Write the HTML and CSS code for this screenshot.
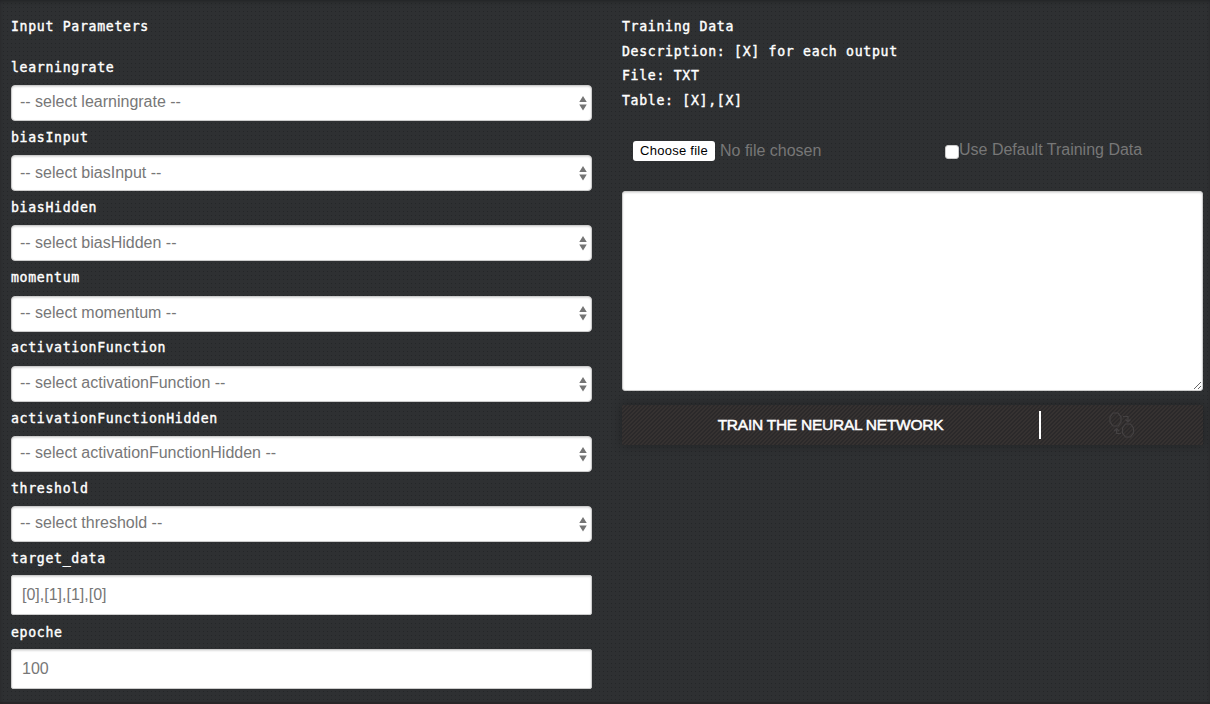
FILE: index.html
```html
<!DOCTYPE html>
<html lang="en">
<head>
<meta charset="utf-8">
<title>Neural Network Training</title>
<link rel="stylesheet" href="styles.css">
</head>
<body>
<main class="page">
  <form class="params">
    <h2 class="mono title">Input Parameters</h2>
    <div class="field"><label class="mono label">learningrate</label><div class="select"><span>-- select learningrate --</span><svg class="arrows" viewBox="0 0 8 16"><path d="M4 0 8 6.500H0zM0 9h8l-4 6.500z"/></svg></div></div>
    <div class="field"><label class="mono label">biasInput</label><div class="select"><span>-- select biasInput --</span><svg class="arrows" viewBox="0 0 8 16"><path d="M4 0 8 6.500H0zM0 9h8l-4 6.500z"/></svg></div></div>
    <div class="field"><label class="mono label">biasHidden</label><div class="select"><span>-- select biasHidden --</span><svg class="arrows" viewBox="0 0 8 16"><path d="M4 0 8 6.500H0zM0 9h8l-4 6.500z"/></svg></div></div>
    <div class="field"><label class="mono label">momentum</label><div class="select"><span>-- select momentum --</span><svg class="arrows" viewBox="0 0 8 16"><path d="M4 0 8 6.500H0zM0 9h8l-4 6.500z"/></svg></div></div>
    <div class="field"><label class="mono label">activationFunction</label><div class="select"><span>-- select activationFunction --</span><svg class="arrows" viewBox="0 0 8 16"><path d="M4 0 8 6.500H0zM0 9h8l-4 6.500z"/></svg></div></div>
    <div class="field"><label class="mono label">activationFunctionHidden</label><div class="select"><span>-- select activationFunctionHidden --</span><svg class="arrows" viewBox="0 0 8 16"><path d="M4 0 8 6.500H0zM0 9h8l-4 6.500z"/></svg></div></div>
    <div class="field"><label class="mono label">threshold</label><div class="select"><span>-- select threshold --</span><svg class="arrows" viewBox="0 0 8 16"><path d="M4 0 8 6.500H0zM0 9h8l-4 6.500z"/></svg></div></div>
    <div class="field text-field"><label class="mono label">target_data</label><input class="input" type="text" value="[0],[1],[1],[0]"></div>
    <div class="field text-field"><label class="mono label">epoche</label><input class="input" type="text" value="100"></div>
  </form>
  <section class="training">
    <div class="mono info">
      <div>Training Data</div>
      <div>Description: [X] for each output</div>
      <div>File: TXT</div>
      <div>Table: [X],[X]</div>
    </div>
    <div class="source">
      <div class="file"><button class="choose" type="button">Choose file</button><span>No file chosen</span></div>
      <label class="default"><input class="check" type="checkbox"><span class="default-text">Use Default Training Data</span></label>
    </div>
    <textarea class="data"></textarea>
    <div class="train">
      <div class="train-text"><span>TRAIN THE NEURAL NETWORK</span></div>
      <div class="train-icon">
        <svg class="nodes" viewBox="0 0 26 26"><path d="M4 1h5l3 4v5l-3 4H4L1 10V5zM16.500 12h5l3 4v5l-3 4h-5l-3-4v-5zM14 4.500h5v5M16.500 7.500 19 10l2.500-2.500M12 21.500H7.500v-5M5 19l2.500-2.500L10 19"/></svg>
      </div>
    </div>
  </section>
</main>
</body>
</html>
```
FILE: styles.css
```css
* { box-sizing: border-box; }
body {
  margin: 0;
  height: 704px;
  overflow: hidden;
  background-color: #2e3032;
  background-image: conic-gradient(from 90deg at 3px 3px, #242628 25%, transparent 0);
  background-size: 4px 4px;
  font: 16px/20px "Liberation Sans", Arial, sans-serif;
  color: #777;
  box-shadow: inset 0 3px 4px -2px #202224, inset 0 -2px 1px #292628;
}
.page {
  display: grid;
  grid-template-columns: 581px 581px;
  column-gap: 30px;
  padding: 15px 7px 0 11px;
}
.mono {
  font: 13.2px/24.6px "DejaVu Sans Mono", monospace;
  letter-spacing: .68px;
  color: #fff;
  white-space: nowrap;
  -webkit-text-stroke: .4px #fff;
}
.title { margin: 0; height: 35.9px; }
.field { height: 70.2px; }
.label { display: block; height: 34.2px; padding-top: 4.7px; }
.select {
  display: flex;
  align-items: center;
  justify-content: space-between;
  height: 36px;
  padding: 0 5px 1.5px 8px;
  background: #fff;
  border: 1px solid #ccc;
  border-radius: 4px;
  box-shadow: inset 0 1px 2px #ddd;
}
.arrows { width: 8px; height: 15px; margin-top: 2px; margin-right: -1px; fill: #757575; }
.text-field { height: 73.8px; }
.text-field .label { height: 33px; padding-top: 5px; }
.text-field + .text-field .label { height: 33.2px; }
.input {
  display: block;
  width: 581px;
  height: 40px;
  margin: 0;
  padding: 0 10px;
  border: 1px solid #ccc;
  border-radius: 2px;
  box-shadow: inset 0 1px 2px #ddd;
  background: #fff;
  color: #777;
  font: 16px "Liberation Sans", Arial, sans-serif;
}
.source {
  display: flex;
  height: 77.5px;
  padding: 27.5px 0 0 11px;
}
.file { display: flex; gap: 5px; width: 312px; }
.choose {
  height: 20px;
  width: 82px;
  padding: 0;
  border: 0;
  border-radius: 3px;
  background: #fff;
  color: #000;
  font: 13px/20px "Liberation Sans", Arial, sans-serif;
  letter-spacing: .27px;
}
.default { display: flex; line-height: 18px; }
.check {
  appearance: none;
  width: 14px;
  height: 14px;
  margin: 4px 0 0;
  border: 1px solid #ccc;
  border-radius: 3px;
  background: #fff;
}
.data {
  display: block;
  width: 581px;
  height: 200px;
  margin: 0;
  border: 1px solid #ccc;
  border-radius: 3px;
  background: #fff;
  box-shadow: inset 0 1px 2px #ddd;
  resize: both;
}
.train {
  display: flex;
  align-items: center;
  height: 40px;
  margin-top: 14px;
  background: repeating-linear-gradient(135deg, #2b292a 0 1.4px, #363231 1.4px 2.828px);
  box-shadow: 0 0 10px rgba(0, 0, 0, .3);
}
.train-text {
  width: 419px;
  height: 28px;
  border-right: 2px solid #fff;
  color: #fff;
  font-size: 15.5px;
  line-height: 27px;
  text-align: center;
  -webkit-text-stroke: .5px #fff;
}
.train-text span { letter-spacing: -.25px; }
.train-icon { flex: 1; display: flex; justify-content: center; }
.nodes { width: 26px; height: 26px; fill: none; stroke: #444142; stroke-width: 1.2; }
```
